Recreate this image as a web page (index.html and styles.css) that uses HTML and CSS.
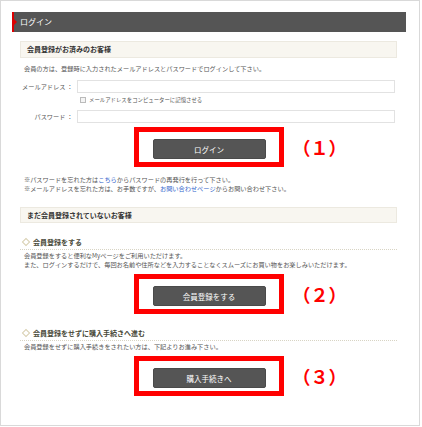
FILE: index.html
```html
<!DOCTYPE html>
<html lang="ja">
<head>
  <meta charset="UTF-8" />
  <title>ログイン</title>
  <link rel="stylesheet" href="styles.css">
</head>
<body>
<div class="frame">
  <div class="page-title">ログイン</div>

  <div class="content">
    <h2 class="box-head">会員登録がお済みのお客様</h2>
    <p class="intro">会員の方は、登録時に入力されたメールアドレスとパスワードでログインして下さい。</p>

    <div class="form-row">
      <label class="form-label">メールアドレス ：</label>
      <div class="form-input"></div>
    </div>
    <div class="remember"><span class="check"></span>メールアドレスをコンピューターに記憶させる</div>
    <div class="form-row pw-row">
      <label class="form-label">パスワード ：</label>
      <div class="form-input"></div>
    </div>

    <div class="action action-1">
      <div class="mark"><a class="btn">ログイン</a></div>
      <span class="num">（１）</span>
    </div>

    <p class="notes">※パスワードを忘れた方は<a href="#">こちら</a>からパスワードの再発行を行って下さい。<br>
    ※メールアドレスを忘れた方は、お手数ですが、<a href="#">お問い合わせページ</a>からお問い合わせ下さい。</p>

    <h2 class="box-head head-2">まだ会員登録されていないお客様</h2>

    <h3 class="sub-head">会員登録をする</h3>
    <p class="desc">会員登録をすると便利なMyページをご利用いただけます。<br>
    また、ログインするだけで、毎回お名前や住所などを入力することなくスムーズにお買い物をお楽しみいただけます。</p>

    <div class="action">
      <div class="mark"><a class="btn">会員登録をする</a></div>
      <span class="num">（２）</span>
    </div>

    <h3 class="sub-head">会員登録をせずに購入手続きへ進む</h3>
    <p class="desc">会員登録をせずに購入手続きをされたい方は、下記よりお進み下さい。</p>

    <div class="action">
      <div class="mark"><a class="btn">購入手続きへ</a></div>
      <span class="num">（３）</span>
    </div>
  </div>
</div>
</body>
</html>
```

FILE: styles.css
```css
body { margin: 0; background: #fff; font-family: "Noto Sans CJK JP", "Noto Sans", sans-serif; color: #555; }
.frame { box-sizing: border-box; width: 420px; height: 426px; border: 1px solid #d9d9d9; padding: 11px 13px 0 11px; }
.page-title { position: relative; height: 20px; line-height: 20px; background: #555; border-left: 2px solid #d00; color: #fff; font-size: 8px; padding-left: 6px; }
.page-title::before { content: ""; position: absolute; left: 0; top: 7px; border: 3px solid transparent; border-left: 3px solid #d00; }
.content { margin: 0 9px 0 8px; }
.box-head { margin: 9px 0 0; height: 15px; line-height: 15px; background: #f8f6f0; border: 1px solid #ece9e0; font-size: 7px; font-weight: bold; color: #333; padding-left: 6px; }
.head-2 { margin-top: 14px; height: 14px; line-height: 14px; }
p { margin: 0; }
.intro { margin-top: 6px; padding-left: 4px; font-size: 6.2px; line-height: 10px; }
.form-row { display: flex; align-items: center; margin-top: 6px; }
.pw-row { margin-top: 5px; }
.form-label { width: 53px; text-align: right; font-size: 6.2px; padding-right: 4px; }
.form-input { flex: 1; height: 11px; border: 1px solid #e2e2e2; margin-right: 2px; background: #fff; }
.remember { margin-top: 2px; padding-left: 60px; height: 10px; line-height: 10px; font-size: 5.4px; display: flex; align-items: center; }
.check { width: 4px; height: 4px; border: 1px solid #bbb; margin-right: 3px; background: #f4f4f4; }
.action { display: grid; grid-template-columns: 1fr 150px 1fr; align-items: center; margin-top: 4px; }
.mark { grid-column: 2; box-sizing: border-box; height: 40px; border: 5px solid #f00; padding: 7px 13px 3px 14px; }
.btn { display: block; height: 20px; line-height: 20px; background: #555; border: 1px solid #4a4a4a; box-sizing: border-box; border-radius: 2px; color: #fff; text-align: center; font-size: 7.5px; }
.num { grid-column: 3; padding-left: 9px; color: #f00; font-size: 18px; font-weight: bold; line-height: 20px; }
.notes { margin-top: 8px; padding-left: 4px; font-size: 6.2px; line-height: 9px; }
.notes a { color: #3366cc; text-decoration: none; }
.sub-head { margin: 14px 0 0; font-size: 7px; font-weight: bold; color: #4a4a3a; line-height: 10px; padding: 0 0 2px 2px; border-bottom: 1px dotted #d8d4c4; display: flex; align-items: center; }
.sub-head::before { content: ""; width: 4px; height: 4px; border: 1px solid #d8cfb0; transform: rotate(45deg); margin: 0 4px 0 1px; }
.desc { margin-top: 1px; padding-left: 4px; font-size: 6.2px; line-height: 9px; }
.desc + .action { margin-top: 5px; }
```
